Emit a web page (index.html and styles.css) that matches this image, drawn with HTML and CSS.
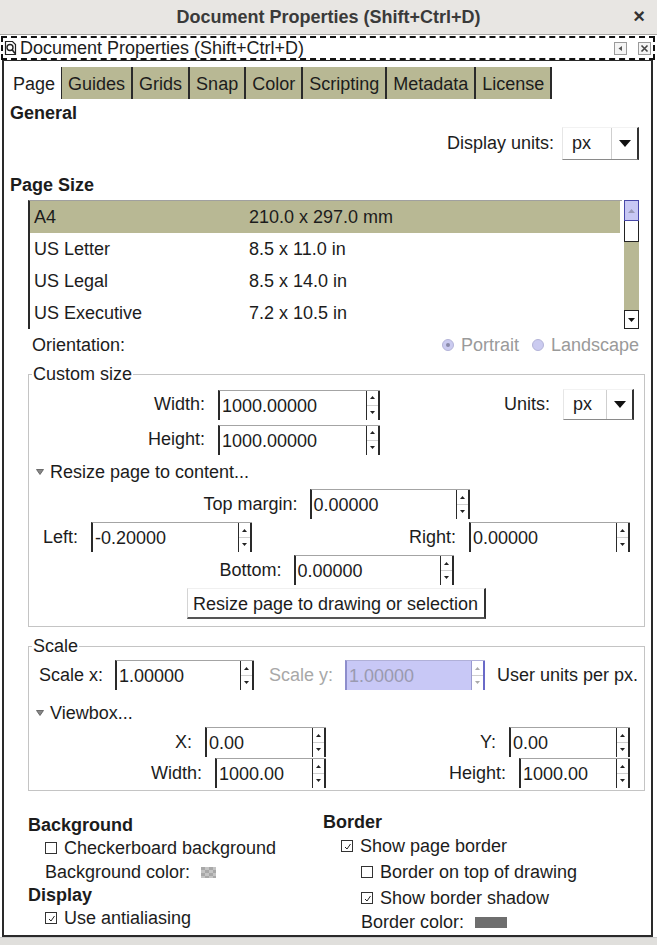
FILE: index.html
```html
<!DOCTYPE html>
<html>
<head>
<meta charset="utf-8">
<link rel="stylesheet" href="styles.css">
</head>
<body>
<div class="titlebar">
  <span class="title">Document Properties (Shift+Ctrl+D)</span>
  <span class="close">×</span>
</div>
<div class="dockhead">
  <svg class="dockicon" width="13" height="16" viewBox="0 0 13 16"><path d="M1.5 1.5h7l3 3v10h-10z" fill="#fff" stroke="#222" stroke-width="1.2"/><circle cx="6" cy="7.5" r="3" fill="none" stroke="#222" stroke-width="1.4"/><path d="M8 9.5l3 4" stroke="#222" stroke-width="1.6"/></svg>
  <span class="docktitle">Document Properties (Shift+Ctrl+D)</span>
  <span class="dockbtns">
    <span class="dbtn"><svg width="13" height="13" viewBox="0 0 13 13"><rect x="0.5" y="0.5" width="12" height="12" fill="#f4f4f4" stroke="#9a9a9a"/><path d="M8 4v5l-3.5-2.5z" fill="#555"/></svg></span>
    <span class="dbtn"><svg width="13" height="13" viewBox="0 0 13 13"><rect x="0.5" y="0.5" width="12" height="12" fill="#f4f4f4" stroke="#9a9a9a"/><path d="M3.5 3.5l6 6M9.5 3.5l-6 6" stroke="#444" stroke-width="1.6"/></svg></span>
  </span>
</div>
<div class="panel">
  <div class="tabs">
    <span class="tab active">Page</span>
    <span class="tab first">Guides</span>
    <span class="tab">Grids</span>
    <span class="tab">Snap</span>
    <span class="tab">Color</span>
    <span class="tab">Scripting</span>
    <span class="tab">Metadata</span>
    <span class="tab">License</span>
  </div>
  <div class="content">
    <div class="heading">General</div>
    <div class="unitsrow">
      <span class="lbl">Display units:</span>
      <span class="combo c77"><span class="cval">px</span><span class="carrow"><svg width="12" height="7" viewBox="0 0 12 7"><path d="M0 0h12l-6 7z" fill="#111"/></svg></span></span>
    </div>
    <div class="heading ps">Page Size</div>
    <div class="listwrap">
      <div class="list">
        <div class="lrow sel"><span class="lname">A4</span><span>210.0 x 297.0 mm</span></div>
        <div class="lrow"><span class="lname">US Letter</span><span>8.5 x 11.0 in</span></div>
        <div class="lrow"><span class="lname">US Legal</span><span>8.5 x 14.0 in</span></div>
        <div class="lrow"><span class="lname">US Executive</span><span>7.2 x 10.5 in</span></div>
      </div>
      <div class="vscroll">
        <span class="sb-up"><svg width="7" height="4" viewBox="0 0 7 4"><path d="M0 4h7l-3.5-4z" fill="#9a9ab8"/></svg></span>
        <span class="sb-thumb"></span>
        <span class="sb-trough"></span>
        <span class="sb-down"><svg width="7" height="4" viewBox="0 0 7 4"><path d="M0 0h7l-3.5 4z" fill="#111"/></svg></span>
      </div>
    </div>
    <div class="orient">
      <span>Orientation:</span>
      <span class="radios">
        <span class="radio on"><i></i>Portrait</span>
        <span class="radio"><i></i>Landscape</span>
      </span>
    </div>

    <fieldset class="frame custom">
      <legend>Custom size</legend>
      <div class="sizerow">
        <span class="slbl">Width:</span>
        <span class="spin w162"><span class="val">1000.00000</span><span class="sbtn"><svg width="5" height="3" viewBox="0 0 5 3"><path d="M0 3h5l-2.5-3z" fill="#222"/></svg><svg width="5" height="3" viewBox="0 0 5 3"><path d="M0 0h5l-2.5 3z" fill="#222"/></svg></span></span>
        <span class="grow"></span>
        <span class="lbl">Units:</span>
        <span class="combo c71"><span class="cval">px</span><span class="carrow"><svg width="12" height="7" viewBox="0 0 12 7"><path d="M0 0h12l-6 7z" fill="#111"/></svg></span></span>
      </div>
      <div class="sizerow r2">
        <span class="slbl">Height:</span>
        <span class="spin w162"><span class="val">1000.00000</span><span class="sbtn"><svg width="5" height="3" viewBox="0 0 5 3"><path d="M0 3h5l-2.5-3z" fill="#222"/></svg><svg width="5" height="3" viewBox="0 0 5 3"><path d="M0 0h5l-2.5 3z" fill="#222"/></svg></span></span>
      </div>
      <div class="expander rs"><svg width="8" height="6" viewBox="0 0 8 6"><path d="M0.5 0.5h7l-3.5 5z" fill="#888" stroke="#555" stroke-width="0.8"/></svg>Resize page to content...</div>
      <div class="mrow center top">
        <span class="lbl">Top margin:</span>
        <span class="spin w160"><span class="val">0.00000</span><span class="sbtn"><svg width="5" height="3" viewBox="0 0 5 3"><path d="M0 3h5l-2.5-3z" fill="#222"/></svg><svg width="5" height="3" viewBox="0 0 5 3"><path d="M0 0h5l-2.5 3z" fill="#222"/></svg></span></span>
      </div>
      <div class="mrow split">
        <span class="pair"><span class="lbl">Left:</span>
        <span class="spin w161"><span class="val">-0.20000</span><span class="sbtn"><svg width="5" height="3" viewBox="0 0 5 3"><path d="M0 3h5l-2.5-3z" fill="#222"/></svg><svg width="5" height="3" viewBox="0 0 5 3"><path d="M0 0h5l-2.5 3z" fill="#222"/></svg></span></span></span>
        <span class="pair"><span class="lbl">Right:</span>
        <span class="spin w161"><span class="val">0.00000</span><span class="sbtn"><svg width="5" height="3" viewBox="0 0 5 3"><path d="M0 3h5l-2.5-3z" fill="#222"/></svg><svg width="5" height="3" viewBox="0 0 5 3"><path d="M0 0h5l-2.5 3z" fill="#222"/></svg></span></span></span>
      </div>
      <div class="mrow center bot">
        <span class="lbl">Bottom:</span>
        <span class="spin w160"><span class="val">0.00000</span><span class="sbtn"><svg width="5" height="3" viewBox="0 0 5 3"><path d="M0 3h5l-2.5-3z" fill="#222"/></svg><svg width="5" height="3" viewBox="0 0 5 3"><path d="M0 0h5l-2.5 3z" fill="#222"/></svg></span></span>
      </div>
      <div class="btnrow"><span class="button">Resize page to drawing or selection</span></div>
    </fieldset>

    <fieldset class="frame scale">
      <legend>Scale</legend>
      <div class="scalerow">
        <span class="lbl">Scale x:</span>
        <span class="spin w139"><span class="val">1.00000</span><span class="sbtn"><svg width="5" height="3" viewBox="0 0 5 3"><path d="M0 3h5l-2.5-3z" fill="#222"/></svg><svg width="5" height="3" viewBox="0 0 5 3"><path d="M0 0h5l-2.5 3z" fill="#222"/></svg></span></span>
        <span class="lbl dim">Scale y:</span>
        <span class="spin w140 disabled"><span class="val">1.00000</span><span class="sbtn"><svg width="5" height="3" viewBox="0 0 5 3"><path d="M0 3h5l-2.5-3z" fill="#aaa"/></svg><svg width="5" height="3" viewBox="0 0 5 3"><path d="M0 0h5l-2.5 3z" fill="#aaa"/></svg></span></span>
        <span class="lbl">User units per px.</span>
      </div>
      <div class="expander vb"><svg width="8" height="6" viewBox="0 0 8 6"><path d="M0.5 0.5h7l-3.5 5z" fill="#888" stroke="#555" stroke-width="0.8"/></svg>Viewbox...</div>
      <div class="vbgrid">
        <span class="pair"><span class="lbl">X:</span>
        <span class="spin w121"><span class="val">0.00</span><span class="sbtn"><svg width="5" height="3" viewBox="0 0 5 3"><path d="M0 3h5l-2.5-3z" fill="#222"/></svg><svg width="5" height="3" viewBox="0 0 5 3"><path d="M0 0h5l-2.5 3z" fill="#222"/></svg></span></span></span>
        <span class="pair"><span class="lbl">Y:</span>
        <span class="spin w121"><span class="val">0.00</span><span class="sbtn"><svg width="5" height="3" viewBox="0 0 5 3"><path d="M0 3h5l-2.5-3z" fill="#222"/></svg><svg width="5" height="3" viewBox="0 0 5 3"><path d="M0 0h5l-2.5 3z" fill="#222"/></svg></span></span></span>
        <span class="pair"><span class="lbl">Width:</span>
        <span class="spin w111"><span class="val">1000.00</span><span class="sbtn"><svg width="5" height="3" viewBox="0 0 5 3"><path d="M0 3h5l-2.5-3z" fill="#222"/></svg><svg width="5" height="3" viewBox="0 0 5 3"><path d="M0 0h5l-2.5 3z" fill="#222"/></svg></span></span></span>
        <span class="pair"><span class="lbl">Height:</span>
        <span class="spin w111"><span class="val">1000.00</span><span class="sbtn"><svg width="5" height="3" viewBox="0 0 5 3"><path d="M0 3h5l-2.5-3z" fill="#222"/></svg><svg width="5" height="3" viewBox="0 0 5 3"><path d="M0 0h5l-2.5 3z" fill="#222"/></svg></span></span></span>
      </div>
    </fieldset>

    <div class="bottom">
      <div class="bcol left">
        <div class="heading">Background</div>
        <div class="check"><span class="box"></span>Checkerboard background</div>
        <div class="colorrow">Background color: <span class="swatch checker"></span></div>
        <div class="heading">Display</div>
        <div class="check"><span class="box on"><svg width="9" height="9" viewBox="0 0 9 9"><path d="M2 5l2 2 3.5-5" fill="none" stroke="#222" stroke-width="1"/></svg></span>Use antialiasing</div>
      </div>
      <div class="bcol right">
        <div class="heading">Border</div>
        <div class="check spb"><span class="box on"><svg width="9" height="9" viewBox="0 0 9 9"><path d="M2 5l2 2 3.5-5" fill="none" stroke="#222" stroke-width="1"/></svg></span>Show page border</div>
        <div class="sub">
          <div class="check"><span class="box"></span>Border on top of drawing</div>
          <div class="check"><span class="box on"><svg width="9" height="9" viewBox="0 0 9 9"><path d="M2 5l2 2 3.5-5" fill="none" stroke="#222" stroke-width="1"/></svg></span>Show border shadow</div>
          <div class="colorrow">Border color: <span class="swatch grey"></span></div>
        </div>
      </div>
    </div>
  </div>
</div>
<div class="footer"></div>
</body>
</html>
```
FILE: styles.css
```css
* { box-sizing: border-box; }
html, body { margin: 0; padding: 0; }
body {
  width: 657px;
  height: 946px;
  overflow: hidden;
  background: #ffffff;
  font-family: "Liberation Sans", Arial, sans-serif;
  font-size: 18px;
  color: #1c1c1c;
  white-space: nowrap;
}
.titlebar {
  height: 35px;
  background: #e8e6e3;
  border-bottom: 1px solid #a9a7a4;
  display: flex;
  align-items: center;
  justify-content: center;
  position: relative;
}
.title {
  font-weight: bold;
  font-size: 18px;
  color: #3a3a3a;
}
.close {
  position: absolute;
  right: 12px;
  top: 5px;
  font-size: 20px;
  font-weight: bold;
  color: #333;
}
.dockhead {
  height: 24px;
  margin: 1px 2px 0 1px;
  border: 2px dashed #111;
  display: flex;
  align-items: center;
  padding-left: 1px;
}
.dockicon { margin-right: 3px; }
.docktitle { font-size: 18px; line-height: 20px; flex: 1; }
.dockbtns { display: flex; gap: 11px; margin-right: 2px; }
.dbtn { display: flex; }

.panel {
  margin: 0 4px 0 2px;
  border-left: 2px solid #2a2a2a;
  border-right: 2px solid #2a2a2a;
  border-top: 1px solid #2a2a2a;
  border-bottom: 2px solid #2a2a2a;
  height: 877px;
  display: flex;
  flex-direction: column;
}
.tabs {
  display: flex;
  padding: 6px 0 0 1px;
  height: 39px;
}
.tab {
  height: 32px;
  line-height: 34px;
  padding: 0 6px;
  background: #b8b894;
  border-right: 2px solid #2a2a2a;
}
.tab.active {
  background: #ffffff;
  border-right: 0;
  padding: 0 6px 0 8px;
}
.tab.first { border-left: 1px solid #2a2a2a; }

.content {
  flex: 1;
  padding: 2px 12px 0 6px;
}
.heading {
  font-weight: bold;
  line-height: 22px;
  height: 22px;
}
.unitsrow {
  display: flex;
  justify-content: flex-end;
  align-items: center;
  margin-top: 3px;
  gap: 8px;
}
.combo {
  display: flex;
  height: 33px;
  align-items: center;
  border-right: 2px solid #333;
  border-bottom: 1px solid #8a8a8a;
  border-top: 1px solid #f2f2f2;
  border-left: 1px solid #e6e6e6;
  flex-shrink: 0;
}
.combo.c77 { width: 77px; }
.combo.c71 { width: 71px; height: 31px; }
.cval { flex: 1; padding-left: 9px; }
.carrow {
  width: 26px;
  height: 100%;
  border-left: 1px solid #cfcfcf;
  display: flex;
  align-items: center;
  justify-content: center;
}
.heading.ps { margin-top: 14px; }

.listwrap {
  display: flex;
  margin: 4px 0 0 18px;
  gap: 2px;
  height: 129px;
}
.list {
  flex: 1;
  border-left: 2px solid #2a2a2a;
  border-top: 1px solid #a0a0a0;
}
.lrow {
  height: 32px;
  line-height: 32px;
  padding-left: 4px;
  display: flex;
  margin-right: 2px;
}
.lrow.sel { background: #b8b894; }
.lname { width: 215px; }
.vscroll {
  width: 15px;
  display: flex;
  flex-direction: column;
  background: #b8b894;
}
.sb-up {
  height: 21px;
  background: #c8c8f4;
  border: 1px solid #4848a8;
  display: flex; align-items: center; justify-content: center;
}
.sb-thumb {
  height: 21px;
  background: #fff;
  border: 1px solid #222;
  border-top: 0;
}
.sb-trough { flex: 1; }
.sb-down {
  height: 19px;
  background: #fff;
  border: 1px solid #222;
  display: flex; align-items: center; justify-content: center;
}

.orient {
  display: flex;
  justify-content: space-between;
  align-items: center;
  line-height: 22px;
  margin: 5px 0 0 22px;
}
.radios { display: flex; gap: 13px; color: #9a9a9a; }
.radio { display: flex; align-items: center; }
.radio i {
  width: 12px; height: 12px;
  border-radius: 50%;
  background: #cbcbf0;
  border: 1px solid #b4b4d8;
  margin-right: 7px;
  display: flex; align-items: center; justify-content: center;
}
.radio.on i::after {
  content: "";
  width: 4px; height: 4px; border-radius: 50%;
  background: #8a8aa8;
}

.frame {
  margin: 7px -6px 0 18px;
  border: 1px solid #c4c4c4;
  padding: 4px 10px 7px 10px;
  min-width: 0;
}
.frame legend {
  padding: 0 1px;
  margin-left: -7px;
  line-height: 22px;
}
.sizerow {
  display: flex;
  align-items: center;
  height: 31px;
}
.sizerow.r2 { margin-top: 4px; }
.slbl { width: 166px; text-align: right; margin-right: 13px; }
.grow { flex: 1; }
.sizerow .lbl { margin-right: 13px; }

.spin {
  display: flex;
  height: 30px;
  background: #fff;
  border-top: 1px solid #a4a4a4;
  border-left: 2px solid #2a2a2a;
  flex-shrink: 0;
}
.spin .val {
  flex: 1;
  padding-left: 2px;
  line-height: 30px;
}
.sbtn {
  width: 14px;
  border-left: 1px solid #2a2a2a;
  border-right: 2px solid #2a2a2a;
  display: flex;
  flex-direction: column;
  align-items: center;
  justify-content: space-around;
  background: linear-gradient(#fff 49%, #cfcfcf 49%, #cfcfcf 52%, #fff 52%);
}
.spin.disabled { background: #c8c8f6; border-left-color: #8e8ecc; border-top-color: #b0b0d8; }
.spin.disabled .val { color: #9a9ab0; }
.spin.disabled .sbtn { border-left-color: #9a9ad0; border-right-color: #6a6ac8; }
.w162 { width: 162px; }
.w161 { width: 161px; }
.w160 { width: 160px; }
.w140 { width: 140px; }
.w139 { width: 139px; }
.w121 { width: 121px; }
.w111 { width: 111px; }

.expander {
  display: flex;
  align-items: center;
  line-height: 22px;
  margin: 5px 0 0 -3px;
}
.expander.rs { margin-top: 6px; }
.expander svg { margin-right: 6px; }
.mrow {
  display: flex;
  align-items: center;
  height: 30px;
}
.mrow.center { justify-content: center; gap: 12px; }
.mrow.top { margin-top: 6px; }
.mrow.bot { margin-top: 3px; }
.mrow.split { justify-content: space-between; margin: 3px 4px 0 4px; }
.pair { display: flex; align-items: center; gap: 13px; }
.btnrow { display: flex; justify-content: center; margin-top: 3px; }
.button {
  height: 31px;
  line-height: 30px;
  padding: 0 6px 0 5px;
  border-left: 1px solid #d4d4d4;
  border-top: 1px solid #f0f0f0;
  border-right: 2px solid #333;
  border-bottom: 2px solid #555;
}

.frame.scale { margin-top: 8px; padding: 3px 4px 2px 10px; }
.scalerow {
  display: flex;
  align-items: center;
  gap: 12px;
  height: 30px;
}
.scalerow .dim { color: #a8a8a8; margin-left: 3px; }
.expander.vb { margin-top: 12px; }
.vbgrid {
  display: grid;
  grid-template-columns: 287px 304px;
  row-gap: 1px;
  margin-top: 3px;
}
.vbgrid .pair { justify-content: flex-end; height: 30px; }

.bottom {
  display: flex;
  margin: 23px 0 0 18px;
}
.bcol.left { width: 295px; }
.bcol.right { margin-top: -3px; }
.check, .colorrow {
  display: flex;
  align-items: center;
  line-height: 24px;
  height: 24px;
  padding-left: 17px;
}
.check.spb { margin-top: 1px; }
.box {
  width: 12px; height: 12px;
  border: 1px solid #333;
  margin-right: 7px;
  display: flex; align-items: center; justify-content: center;
  background: #fff;
}
.swatch { display: inline-block; margin-left: 11px; }
.swatch.checker {
  width: 15px; height: 11px;
  background: conic-gradient(#c4c4c4 25%, #a8a8a8 25% 50%, #c4c4c4 50% 75%, #a8a8a8 75%);
  background-size: 8px 6px;
}
.swatch.grey { width: 32px; height: 11px; background: #6e6e6e; }
.bcol.right .check { padding-left: 18px; }
.sub .check, .sub .colorrow { padding-left: 38px; }
.bcol.right .sub .check { padding-left: 38px; }
.sub .check { margin-top: 2px; }

.footer {
  height: 8px;
  border-top: 1px solid #c8c8c8;
  background: #e0dfdc;
}
```
